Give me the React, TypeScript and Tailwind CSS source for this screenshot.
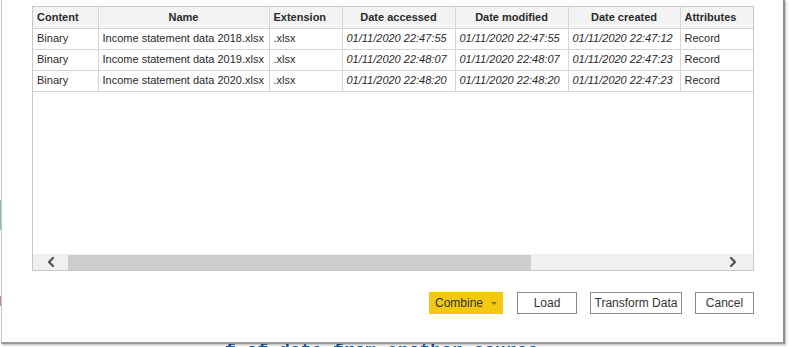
import { ChevronLeft, ChevronRight } from "lucide-react";

const columns = [
  { label: "Content", width: "w-[65px]", align: "text-left" },
  { label: "Name", width: "w-[171px]", align: "text-center" },
  { label: "Extension", width: "w-[73px]", align: "text-left" },
  { label: "Date accessed", width: "w-[113px]", align: "text-center" },
  { label: "Date modified", width: "w-[113px]", align: "text-center" },
  { label: "Date created", width: "w-[112px]", align: "text-center" },
  { label: "Attributes", width: "w-[73px]", align: "text-left" },
];

const rows = [
  ["Binary", "Income statement data 2018.xlsx", ".xlsx", "01/11/2020 22:47:55", "01/11/2020 22:47:55", "01/11/2020 22:47:12", "Record"],
  ["Binary", "Income statement data 2019.xlsx", ".xlsx", "01/11/2020 22:48:07", "01/11/2020 22:48:07", "01/11/2020 22:47:23", "Record"],
  ["Binary", "Income statement data 2020.xlsx", ".xlsx", "01/11/2020 22:48:20", "01/11/2020 22:48:20", "01/11/2020 22:47:23", "Record"],
];

function Button({ width, children }: { width: string; children: React.ReactNode }) {
  return (
    <button className={`${width} h-[22px] border border-[#8a8a8a] bg-white text-[12px] text-[#333] flex items-center justify-center`}>
      {children}
    </button>
  );
}

export default function App() {
  return (
    <div
      className="relative w-[789px] h-[347px] overflow-hidden bg-white"
      style={{ fontFamily: '"Liberation Sans", Arial, sans-serif' }}
    >
      {/* Page behind the dialog */}
      <div className="absolute left-0 top-[200px] w-[2px] h-[30px] bg-[#7fc7a6]" />
      <div className="absolute left-0 top-[296px] w-[2px] h-[10px] bg-[#c98a8a]" />
      <div
        className="absolute left-[225px] top-[338px] text-[18px] font-bold text-[#1d5a9a] whitespace-nowrap"
        style={{ fontFamily: '"Liberation Mono", monospace' }}
      >
        f of data from another source
      </div>

      {/* Dialog */}
      <div className="absolute left-[1px] top-0 w-[784px] h-[344px] bg-white border-l border-b-2 border-r-2 border-l-[#c8c8c8] border-b-[#9a9a9a] border-r-[#8f8f8f] shadow-[1px_1px_2px_rgba(0,0,0,0.3)]">
        <div className="ml-[30px] mt-[6px] w-[722px] h-[265px] border border-[#c8c8c8] flex flex-col">
          <table className="w-[720px] table-fixed border-collapse text-[11px] text-[#2a2a2a]">
            <thead>
              <tr className="h-[21px] bg-[#f3f3f3]">
                {columns.map((c) => (
                  <th
                    key={c.label}
                    className={`${c.width} ${c.align} font-bold px-[4px] border-r border-b border-[#d6d6d6] last:border-r-0 whitespace-nowrap overflow-hidden`}
                  >
                    {c.label}
                  </th>
                ))}
              </tr>
            </thead>
            <tbody>
              {rows.map((r, i) => (
                <tr key={i} className="h-[21px]">
                  {r.map((cell, j) => (
                    <td
                      key={j}
                      className={`px-[4px] border-r border-b border-[#d6d6d6] last:border-r-0 whitespace-nowrap overflow-hidden ${
                        j >= 3 && j <= 5 ? "italic" : ""
                      }`}
                    >
                      {cell}
                    </td>
                  ))}
                </tr>
              ))}
            </tbody>
          </table>

          <div className="flex-1" />

          {/* Horizontal scrollbar */}
          <div className="h-[16px] flex items-center bg-[#f0f0f0]">
            <div className="w-[35px] flex justify-center">
              <ChevronLeft className="w-[16px] h-[16px] text-[#555]" strokeWidth={3.5} />
            </div>
            <div className="w-[463px] h-[15px] bg-[#cdcdcd]" />
            <div className="flex-1 flex justify-end pr-[12px]">
              <ChevronRight className="w-[16px] h-[16px] text-[#555]" strokeWidth={3.5} />
            </div>
          </div>
        </div>

        {/* Footer buttons */}
        <div className="flex justify-end items-center w-[752px] mt-[21px]">
          <button className="h-[22px] w-[74px] bg-[#f2c811] text-[12px] text-[#333] flex items-center justify-center gap-[8px]">
            Combine
            <span className="w-0 h-0 border-l-[3px] border-r-[3px] border-t-[3px] border-l-transparent border-r-transparent border-t-[#8a7a30]" />
          </button>
          <div className="w-[14px]" />
          <Button width="w-[60px]">Load</Button>
          <div className="w-[13px]" />
          <Button width="w-[92px]">Transform Data</Button>
          <div className="w-[13px]" />
          <Button width="w-[59px]">Cancel</Button>
        </div>
      </div>
    </div>
  );
}
